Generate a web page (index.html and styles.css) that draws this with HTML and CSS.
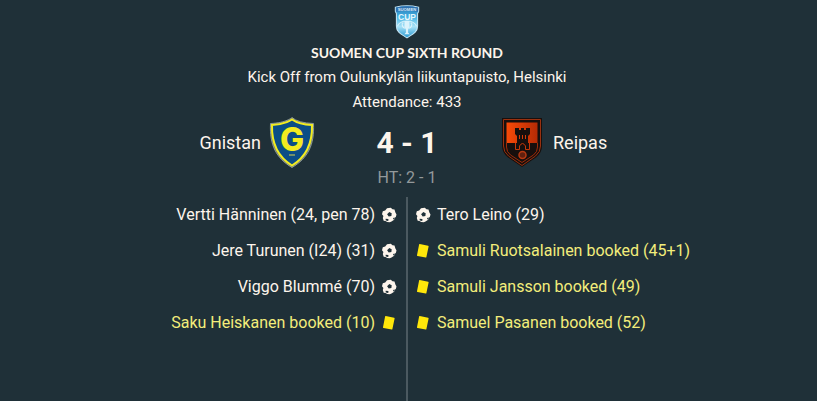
FILE: index.html
```html
<!DOCTYPE html>
<html lang="en">
<head>
<meta charset="utf-8">
<meta name="viewport" content="width=device-width, initial-scale=1">
<title>Gnistan 4 - 1 Reipas</title>
<link rel="stylesheet" href="styles.css">
</head>
<body>
<svg class="defs" aria-hidden="true">
  <defs>
    <symbol id="ball" viewBox="0 0 16 16">
      <path fill="#fdf5ec" d="M6 1.200 9.800.8l1.700 1.400 2 .4.900 2.900 1.100 2.100-.7 2.400-1.300 1-.3 1.800-2.700 1.600-1.700.8-2.600-.1-1.700-1-1.800-.4L1.800 11l.6-2L1 7.200l.8-2.900 2.400-.7z"/>
      <path fill="#1f3038" d="m8.300 5 2.400 1.300-.3 2.700-2.700.5-1.600-2.300zM4.700 11.700l2.500.3.500 1.300-1.300.8-1.800-.8zM12.200 11l1.300-.5-.2 1.500-1.200.6z"/>
    </symbol>
    <symbol id="card" viewBox="0 0 16 16">
      <path fill="#ffe70a" d="M4.800 1.100 13.100 2.700q.6.100.5.700l-2.200 10.600q-.1.600-.7.500L2.500 13q-.6-.1-.5-.7L4.100 1.600q.1-.6.700-.5z"/>
    </symbol>
  </defs>
</svg>
<main class="match">
  <header class="intro">
    <svg class="cup" viewBox="0 0 24 34" role="img" aria-label="Suomen Cup">
      <defs>
        <linearGradient id="cup-fill" x2="0" y2="1">
          <stop offset="0" stop-color="#2673b5"/>
          <stop offset=".35" stop-color="#45b3e2"/>
          <stop offset=".65" stop-color="#a9e2f7"/>
          <stop offset="1" stop-color="#2497d2"/>
        </linearGradient>
      </defs>
      <path d="M1 3Q12 .3 23 3v4l-1 2v12c0 6-6 8-10 11C8 29 2 27 2 21V9L1 7z" fill="url(#cup-fill)" stroke="#c4e6f6"/>
      <path d="M1.500 3.400Q12 1 22.500 3.400v4Q12 5.500 1.500 7.400z" fill="#2d70ae"/>
      <text x="12" y="7" class="cup-small">SUOMEN</text>
      <text x="12" y="15" class="cup-big">CUP</text>
      <path d="M3 21q2-5 9-5t9 5" fill="none" stroke="#d3f0fa"/>
      <path d="M9.500 16h5l-.2 6-1.300 2v3l1.500 1.500h-5L11 27v-3l-1.300-2z" fill="#dcf3fc"/>
      <path d="M9 18H7.500q-.5 4 2.500 5M15 18h1.500q.5 4-2.500 5" fill="none" stroke="#dcf3fc"/>
    </svg>
    <h1 class="title">SUOMEN CUP SIXTH ROUND</h1>
    <p class="info">Kick Off from Oulunkylän liikuntapuisto, Helsinki</p>
    <p class="info">Attendance: 433</p>
  </header>

  <section class="teams">
    <div class="team home">
      <span>Gnistan</span>
      <svg class="crest" viewBox="0 0 50 54" role="img" aria-label="Gnistan crest">
        <path d="M25 2.500q6 5.500 21.500 6C47.500 30 41 43 25 52.500 9 43 2.500 30 3.500 8.500 19 8 25 2.500 25 2.500z" fill="#747f70" stroke="#8b9896"/>
        <path d="M25 4.500q7 5 20 5.500C45.500 29 39 42 25 50.500 11 42 4.500 29 5 10 18 9.500 25 4.500 25 4.500z" fill="#0b4e86" stroke="#f2ec20" stroke-width="2"/>
        <text x="25" y="36" class="crest-letter">G</text>
        <path d="M22 40h6" stroke="#71906b" stroke-width="2"/>
      </svg>
    </div>
    <p class="score">4 - 1</p>
    <div class="team away">
      <svg class="crest" viewBox="0 0 50 54" role="img" aria-label="Reipas crest">
        <defs>
          <linearGradient id="ember">
            <stop offset="0" stop-color="#f84a08"/>
            <stop offset="1" stop-color="#b52b05"/>
          </linearGradient>
        </defs>
        <path d="M5 3h40v28q0 7-6 11.500L25 52 11 42.500Q5 38 5 31z" fill="#170f0d"/>
        <path d="M6.500 4.500h37V31q0 6-5 10L25 50.500 11.500 41q-5-4-5-10z" fill="none" stroke="#99300f"/>
        <path d="M9.500 7.500h31V28h-31z" fill="url(#ember)"/>
        <path d="M9.500 28v4q0 5 4 8L25 47.500 36.500 40q4-3 4-8v-4" fill="none" stroke="#9e2c0a"/>
        <path d="M18 13h4v2h2v-2h3v2h2v-2h4v6l-2 2v7h2v6H18v-6h2v-7l-2-2z" fill="#170f0d"/>
        <path d="M22.500 20v4M25.500 20v4M28.500 20v4" stroke="#d83b07"/>
        <path d="M18.500 28v6.500h4V31q3-5 6 0v3.500h4V28" fill="none" stroke="#c53708"/>
        <circle cx="25.500" cy="40" r="3.500" fill="#61200f" stroke="#b83a12" stroke-width="1.500"/>
      </svg>
      <span>Reipas</span>
    </div>
  </section>
  <p class="half-time">HT: 2 - 1</p>

  <section class="events">
    <ul class="list home-list">
      <li class="event">Vertti Hänninen (24, pen 78)<svg class="icon" role="img" aria-label="Goal"><use href="#ball"/></svg></li>
      <li class="event">Jere Turunen (I24) (31)<svg class="icon" role="img" aria-label="Goal"><use href="#ball"/></svg></li>
      <li class="event">Viggo Blummé (70)<svg class="icon" role="img" aria-label="Goal"><use href="#ball"/></svg></li>
      <li class="event booked">Saku Heiskanen booked (10)<svg class="icon" role="img" aria-label="Yellow card"><use href="#card"/></svg></li>
    </ul>
    <ul class="list away-list">
      <li class="event"><svg class="icon" role="img" aria-label="Goal"><use href="#ball"/></svg>Tero Leino (29)</li>
      <li class="event booked"><svg class="icon" role="img" aria-label="Yellow card"><use href="#card"/></svg>Samuli Ruotsalainen booked (45+1)</li>
      <li class="event booked"><svg class="icon" role="img" aria-label="Yellow card"><use href="#card"/></svg>Samuli Jansson booked (49)</li>
      <li class="event booked"><svg class="icon" role="img" aria-label="Yellow card"><use href="#card"/></svg>Samuel Pasanen booked (52)</li>
    </ul>
  </section>
</main>
</body>
</html>
```
FILE: styles.css
```css
* {
  box-sizing: border-box;
  margin: 0;
  padding: 0;
}

body {
  background: #1f3038;
  color: #fdf5ec;
  font-family: Roboto, "Liberation Sans", sans-serif;
}

.defs {
  position: absolute;
  width: 0;
  height: 0;
}

.match {
  display: flex;
  flex-direction: column;
  min-height: 100vh;
  padding: 4px 3px 0 0;
}

.intro {
  display: flex;
  flex-direction: column;
  align-items: center;
  text-align: center;
}

.cup {
  width: 26px;
  height: 36px;
}

.title,
.info {
  line-height: 25px;
}

.title {
  font-family: Lato, sans-serif;
  font-size: 14px;
  font-weight: 700;
}

.info {
  font-size: 15px;
}

.cup-small {
  font: 700 4px "Liberation Sans", sans-serif;
  fill: #dceefa;
  text-anchor: middle;
}

.cup-big {
  font: 700 8px "Liberation Sans", sans-serif;
  fill: #e8f7fd;
  text-anchor: middle;
}

.teams {
  display: grid;
  grid-template-columns: 1fr 180px 1fr;
  align-items: center;
}

.team {
  display: flex;
  align-items: center;
  gap: 6px;
  font-size: 18px;
}

.home {
  justify-content: flex-end;
}

.crest {
  width: 50px;
  height: 54px;
}

.crest-letter {
  font: 800 32px Inter, sans-serif;
  fill: #f2ec20;
  text-anchor: middle;
}

.score {
  font-size: 30px;
  font-weight: 700;
  text-align: center;
}

.half-time {
  color: #93999b;
  font-size: 16px;
  line-height: 18px;
  text-align: center;
}

.events {
  display: grid;
  grid-template-columns: 1fr 1fr;
  flex: 1;
  margin-top: 10px;
}

.list {
  list-style: none;
}

.home-list {
  border-right: 1px solid #4b5960;
  padding-right: 9px;
}

.away-list {
  border-left: 1px solid #4b5960;
  padding-left: 7px;
}

.event {
  display: flex;
  align-items: center;
  gap: 6px;
  font-size: 16px;
  line-height: 36px;
}

.home-list .event {
  justify-content: flex-end;
}

.booked {
  color: #f3ed7b;
}

.icon {
  flex: none;
  width: 16px;
  height: 16px;
}
```
